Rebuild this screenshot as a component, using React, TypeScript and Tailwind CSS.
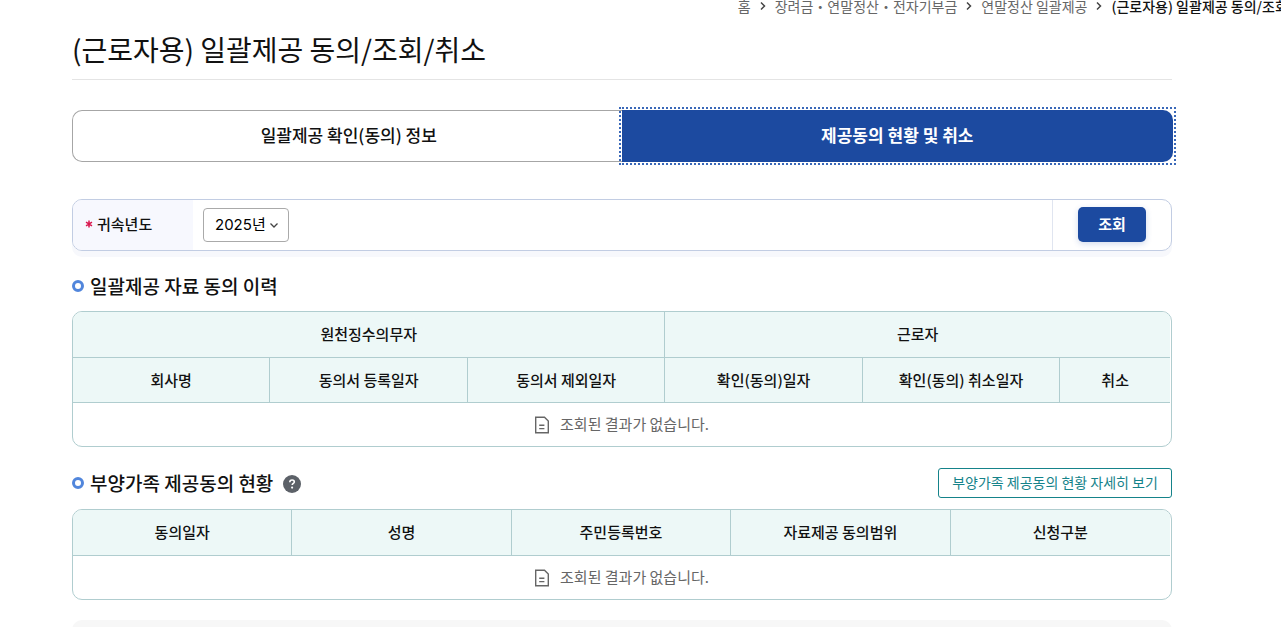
import { useState, type ReactNode } from "react";

const CRUMBS = ["홈", "장려금・연말정산・전자기부금", "연말정산 일괄제공"];
const PAGE_TITLE = "(근로자용) 일괄제공 동의/조회/취소";
const CONSENT_COLUMNS = ["회사명", "동의서 등록일자", "동의서 제외일자", "확인(동의)일자", "확인(동의) 취소일자"];
const FAMILY_COLUMNS = ["동의일자", "성명", "주민등록번호", "자료제공 동의범위", "신청구분"];

export default function App() {
  const [tab, setTab] = useState("status");
  const [year, setYear] = useState("2025");

  return (
    <div className="h-screen overflow-hidden bg-white pr-[109px] pl-[72px] font-['Noto_Sans_CJK_KR',sans-serif] text-[#111]">
      <Breadcrumb />

      <h1 className="border-b border-[#e4e4e4] pt-[9px] pb-[10px] text-[28px] leading-10 font-normal">{PAGE_TITLE}</h1>

      <div role="tablist" className="mt-[30px] flex h-[52px]">
        <button
          type="button"
          role="tab"
          aria-selected={tab === "info"}
          onClick={() => setTab("info")}
          className="flex-1 rounded-l-[10px] border border-r-0 border-[#a6a6a6] pb-0.5 text-[17px] font-medium"
        >
          일괄제공 확인(동의) 정보
        </button>
        <button
          type="button"
          role="tab"
          aria-selected={tab === "status"}
          onClick={() => setTab("status")}
          className="-mr-px -ml-[3px] flex-1 outline-2 outline-offset-1 outline-[#3a68b8] outline-dotted"
        >
          <span className="flex h-full items-center justify-center rounded-r-[10px] bg-[#1c4aa0] pb-0.5 text-[17px] font-bold text-white">
            제공동의 현황 및 취소
          </span>
        </button>
      </div>

      <form
        onSubmit={(e) => e.preventDefault()}
        className="mt-[37px] flex h-[52px] overflow-hidden rounded-[10px] border border-[#c2cde3] shadow-[0_6px_0_#f7f8fc]"
      >
        <label htmlFor="year" className="flex w-[120px] items-center bg-[#f7f8fe] pb-0.5 pl-3 text-[15px] font-medium">
          <Asterisk />
          귀속년도
        </label>
        <div className="flex flex-1 items-center pl-[10px]">
          <div className="relative">
            <select
              id="year"
              value={year}
              onChange={(e) => setYear(e.target.value)}
              className="h-[34px] w-[86px] appearance-none rounded border border-[#aaa] bg-white pl-[11px] font-['Inter','Noto_Sans_CJK_KR',sans-serif] text-[15px] text-black"
            >
              <option value="2025">2025년</option>
              <option value="2024">2024년</option>
            </select>
            <svg viewBox="0 0 10 10" className="pointer-events-none absolute top-3 right-[10px] size-[10px]" fill="none" stroke="#444" strokeWidth="1.3">
              <path d="M1.5 3.5 5 7l3.5-3.5" />
            </svg>
          </div>
        </div>
        <div className="flex w-[119px] items-center justify-center border-l border-[#e0e5f0] pb-px">
          <button
            type="submit"
            className="h-[35px] w-[68px] rounded-[5px] bg-[#1c4aa0] pb-px text-[15px] font-bold text-white shadow-[0_2px_6px_#1c4aa033]"
          >
            조회
          </button>
        </div>
      </form>

      <SectionTitle className="mt-5">일괄제공 자료 동의 이력</SectionTitle>
      <TableFrame className="mt-[10px]">
        <colgroup>
          {CONSENT_COLUMNS.map((name) => (
            <col key={name} className="w-[18%]" />
          ))}
          <col />
        </colgroup>
        <thead>
          <tr className="h-[46px]">
            <HeadCell colSpan={3}>원천징수의무자</HeadCell>
            <HeadCell colSpan={3}>근로자</HeadCell>
          </tr>
          <tr className="h-[45px]">
            {CONSENT_COLUMNS.map((name) => (
              <HeadCell key={name}>{name}</HeadCell>
            ))}
            <HeadCell>취소</HeadCell>
          </tr>
        </thead>
        <EmptyRow colSpan={6} />
      </TableFrame>

      <div className="mt-[21px] flex items-center justify-between">
        <div className="flex items-center gap-[10px]">
          <SectionTitle>부양가족 제공동의 현황</SectionTitle>
          <button type="button" aria-label="도움말" className="mt-0.5">
            <HelpIcon />
          </button>
        </div>
        <button
          type="button"
          className="h-[30px] w-[234px] rounded-[3px] border border-[#15838a] pb-px text-[14px] whitespace-nowrap text-[#15838a]"
        >
          부양가족 제공동의 현황 자세히 보기
        </button>
      </div>
      <TableFrame className="mt-[11px]">
        <thead>
          <tr className="h-[46px]">
            {FAMILY_COLUMNS.map((name) => (
              <HeadCell key={name}>{name}</HeadCell>
            ))}
          </tr>
        </thead>
        <EmptyRow colSpan={5} />
      </TableFrame>

      <div className="mt-5 h-24 rounded-[10px] bg-[#f7f7f7]" />
    </div>
  );
}

function Breadcrumb() {
  return (
    <nav className="-mr-[147px] flex h-5 items-start justify-end text-[14px] leading-3 whitespace-nowrap">
      {CRUMBS.map((name) => (
        <span key={name} className="flex items-center">
          <a href="#" className="text-[#666]">
            {name}
          </a>
          <svg viewBox="0 0 8 10" className="mx-2 h-[10px] w-2" fill="none" stroke="#444" strokeWidth="1.5">
            <path d="M2 1.5 5.5 5 2 8.5" />
          </svg>
        </span>
      ))}
      <span className="font-medium">{PAGE_TITLE}</span>
    </nav>
  );
}

function SectionTitle({ children, className = "" }: { children: ReactNode; className?: string }) {
  return (
    <h2 className={`flex h-[30px] items-center gap-[6px] text-[19px] font-medium ${className}`}>
      <span className="size-3 rounded-full border-[3px] border-[#5186dc]" />
      {children}
    </h2>
  );
}

function TableFrame({ children, className }: { children: ReactNode; className: string }) {
  return (
    <div className={`overflow-hidden rounded-[10px] border border-[#b0cdcf] pr-px ${className}`}>
      <table className="w-full table-fixed border-separate border-spacing-0 text-[15px]">{children}</table>
    </div>
  );
}

function HeadCell({ children, colSpan }: { children: ReactNode; colSpan?: number }) {
  return (
    <th colSpan={colSpan} className="border-r border-b border-[#b0cdcf] bg-[#edf8f7] p-0 font-medium last:border-r-0">
      {children}
    </th>
  );
}

function EmptyRow({ colSpan }: { colSpan: number }) {
  return (
    <tbody>
      <tr className="h-[43px]">
        <td colSpan={colSpan} className="p-0 text-[#666]">
          <div className="flex items-center justify-center gap-[10px]">
            <DocumentIcon />
            조회된 결과가 없습니다.
          </div>
        </td>
      </tr>
    </tbody>
  );
}

function Asterisk() {
  return (
    <svg viewBox="0 0 8 8" className="mr-1 size-2" fill="none" stroke="#d9174f" strokeWidth="1.5">
      <path d="M4 .5v7M1 2.2l6 3.6M7 2.2 1 5.8" />
    </svg>
  );
}

function DocumentIcon() {
  return (
    <svg viewBox="0 0 16 18" className="h-[18px] w-4" fill="none" stroke="#666" strokeWidth="1.4">
      <path d="M1.7 1.2h8.8l3.8 3.8v11.8H1.7z" />
      <path d="M5.2 9.2h5.2M5.2 12.6h5.2" />
    </svg>
  );
}

function HelpIcon() {
  return (
    <svg viewBox="0 0 18 18" className="size-[18px]" fill="none">
      <circle cx="9" cy="9" r="9" fill="#5c6168" />
      <path d="M6.8 7.2c0-1.4 1-2.2 2.3-2.2s2.2.8 2.2 1.9c0 1.5-2.1 1.6-2.1 3.2" stroke="#fff" strokeWidth="1.6" />
      <circle cx="9.1" cy="12.6" r="1.1" fill="#fff" />
    </svg>
  );
}
